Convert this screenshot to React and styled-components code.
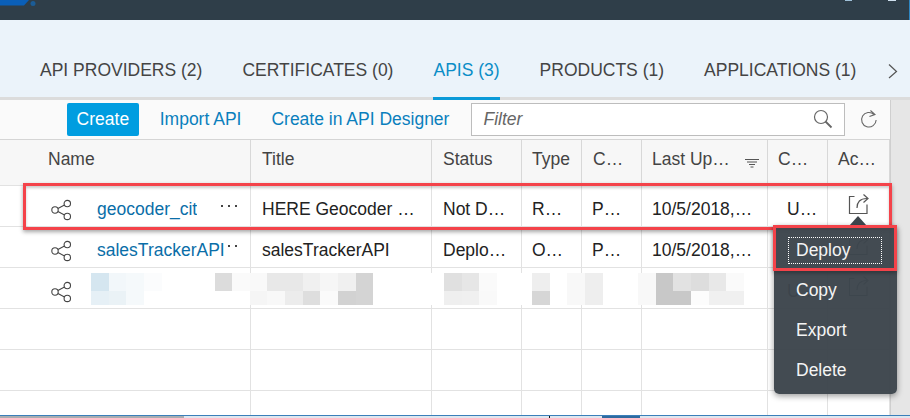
import React from "react";
import styled, { createGlobalStyle } from "styled-components";

const COLUMNS = "251px 181px 90px 60px 60px 126px 60px 62px";
const RED = "#f4434a";

const GlobalStyle = createGlobalStyle`
  html, body {
    margin: 0;
    height: 100%;
    overflow: hidden;
    background: #fff;
  }
`;

const Page = styled.div`
  position: relative;
  display: flex;
  flex-direction: column;
  width: 910px;
  height: 418px;
  overflow: hidden;
  font-family: "Liberation Sans", Arial, sans-serif;
  font-size: 17.5px;
  color: #333;
`;

const TopBar = styled.header`
  position: relative;
  flex: 0 0 20px;
  background: #2f3e49;
  border-right: 1px solid #2e86c1;
  box-sizing: border-box;
`;

const Logo = styled.svg`
  position: absolute;
  left: 0;
  top: 0;
`;

const TabBand = styled.nav`
  flex: 0 0 80px;
  box-sizing: border-box;
  display: flex;
  align-items: flex-end;
  gap: 40px;
  padding-left: 40px;
  background: #ebf3fa;
  border-bottom: 3px solid #dcdcdc;
`;

const Tab = styled.a`
  height: 38px;
  margin-bottom: -3px;
  line-height: 22px;
  white-space: nowrap;
  color: ${p => (p.$active ? "#0a8dc7" : "#444")};
  border-bottom: 3px solid ${p => (p.$active ? "#0a9ad8" : "transparent")};
`;

const TabNext = styled.svg`
  position: absolute;
  left: 887px;
  top: 63px;
`;

const Body = styled.div`
  flex: 0 0 315px;
  display: flex;
`;

const Panel = styled.section`
  width: 890px;
  display: flex;
  flex-direction: column;
  background: #fff;
`;

const Gutter = styled.div`
  flex: 1;
  background: #e6e6e6;
  border-left: 1px solid #cfcfcf;
`;

const Toolbar = styled.div`
  height: 40px;
  box-sizing: border-box;
  display: flex;
  align-items: center;
  padding: 0 12px 1px 67px;
  background: #fafafa;
  border-bottom: 1px solid #d5d5d5;
`;

const PrimaryButton = styled.button`
  width: 72px;
  height: 33px;
  padding: 0;
  border: 0;
  border-radius: 2px;
  background: #009de0;
  color: #fff;
  font: inherit;
`;

const ToolLink = styled.a`
  margin-left: ${p => p.$gap}px;
  color: #0a7fbd;
  white-space: nowrap;
`;

const Filter = styled.div`
  width: 375px;
  height: 33px;
  margin-left: 22px;
  box-sizing: border-box;
  display: flex;
  align-items: center;
  justify-content: space-between;
  padding: 0 11px 0 11px;
  background: #fff;
  border: 1px solid #bdbdbd;
  color: #666;
  font-style: italic;
`;

const RefreshIcon = styled.svg`
  margin-left: 15px;
`;

const Row = styled.div`
  display: grid;
  grid-template-columns: ${COLUMNS};
  flex: ${p => (p.$filler ? "1" : "none")};
  height: ${p => (p.$header ? "46px" : p.$filler ? "auto" : "41px")};
  box-sizing: border-box;
  background: ${p => (p.$header ? "#f7f7f7" : "#fff")};
  border-bottom: ${p => (p.$filler ? "none" : "1px solid #e2e2e2")};
`;

const Cell = styled.div`
  position: relative;
  display: flex;
  align-items: center;
  padding: ${p => (p.$header ? "0 0 6px" : "7px 0 0")};
  padding-left: ${p => p.$indent ?? 11}px;
  border-right: 1px solid ${p => (p.$header ? "#d8d8d8" : "#e2e2e2")};
  color: ${p => (p.$header ? "#444" : "#222")};
  white-space: nowrap;
  overflow: hidden;
`;

const ShareIcon = styled.svg`
  margin-left: 2px;
  flex: none;
`;

const NameLink = styled.a`
  position: relative;
  z-index: 1;
  max-width: 127px;
  margin-left: 23px;
  overflow: hidden;
  background: #fff;
  color: #0a6ea8;
`;

const MoreDots = styled.svg`
  position: absolute;
  right: 12px;
  top: ${p => p.$top}px;
`;

const SortIcon = styled.svg`
  position: absolute;
  left: 103px;
  top: 18px;
`;

const ActionIcon = styled.svg`
  margin: 0 0 12px 9px;
`;

const Mosaic = styled.svg`
  position: absolute;
  left: 91px;
  top: 273px;
`;

const BottomStrip = styled.footer`
  flex: 1;
  display: flex;
  border-top: 1px solid #3a7fba;
  background: #dfe6ee;
`;

const StripPiece = styled.div`
  width: ${p => p.$w}px;
  background: ${p => p.$bg};
`;

const RowHighlight = styled.div`
  position: absolute;
  left: 23px;
  top: 183px;
  width: 869px;
  height: 47px;
  box-sizing: border-box;
  border: 3px solid ${RED};
  box-shadow: 0 2px 4px rgba(0, 0, 0, 0.35), inset 0 2px 3px rgba(0, 0, 0, 0.2);
`;

const Menu = styled.ul`
  position: absolute;
  left: 774px;
  top: 226px;
  width: 123px;
  height: 168px;
  margin: 0;
  padding: 4px 0;
  box-sizing: border-box;
  list-style: none;
  border-radius: 0 0 5px 5px;
  background: rgba(61, 69, 76, 0.97);
  box-shadow: 0 2px 6px rgba(0, 0, 0, 0.4);
  color: #f4f4f4;
`;

const MenuArrow = styled.div`
  position: absolute;
  left: 75px;
  top: -10px;
  width: 0;
  height: 0;
  border-left: 9px solid transparent;
  border-right: 9px solid transparent;
  border-bottom: 10px solid #3d454c;
`;

const MenuItem = styled.li`
  height: 40px;
  display: flex;
  align-items: center;
  padding-left: 22px;
`;

const FocusLabel = styled.span`
  display: flex;
  align-items: center;
  width: 94px;
  height: 27px;
  margin-left: -8px;
  padding-left: 7px;
  box-sizing: border-box;
  border: 1px dotted #fff;
`;

const MenuHighlight = styled.div`
  position: absolute;
  left: -1px;
  top: -1px;
  width: 124px;
  height: 46px;
  box-sizing: border-box;
  border: 3px solid ${RED};
  box-shadow: 0 2px 4px rgba(0, 0, 0, 0.3);
`;

const Share = () => (
  <ShareIcon width="24" height="24" viewBox="0 0 24 24" fill="none" stroke="#444" strokeWidth="1.1">
    <circle cx="5" cy="12" r="3.2" />
    <circle cx="17.3" cy="5.6" r="3.2" />
    <circle cx="17.3" cy="18.4" r="3.2" />
    <path d="M7.9 10.5l6.6-3.4M7.9 13.5l6.6 3.4" />
  </ShareIcon>
);

const ExportGlyph = ({ faint }) => (
  <ActionIcon width="22" height="22" viewBox="0 0 22 22" fill="none" stroke={faint ? "#555c62" : "#555"} strokeWidth="1.2">
    <path d="M6.5 3.5H1.5V20.5H19V11.5" />
    <path d="M9 15c0-6 3-9.500 10-9.500" />
    <path d="M15.500 1.500L20 5.500L15.500 9.500" />
  </ActionIcon>
);

const Dots = ({ top }) => (
  <MoreDots $top={top} width="18" height="4" viewBox="0 0 18 4" fill="#444">
    <rect x="1" y="1" width="2" height="2" />
    <rect x="8" y="1" width="2" height="2" />
    <rect x="15" y="1" width="2" height="2" />
  </MoreDots>
);

const MOSAIC = [
  [0, 0, 18, 18, "#d5e6f0"], [18, 0, 17, 18, "#f2f7fa"], [35, 0, 18, 18, "#f5f9fb"], [53, 0, 18, 18, "#fbfcfd"],
  [0, 18, 18, 14, "#e6f0f6"], [18, 18, 17, 14, "#eaf2f6"], [35, 18, 18, 14, "#f5f9fb"],
  [124, 0, 17, 18, "#dcdcdc"], [141, 0, 18, 18, "#fafafa"], [159, 0, 17, 18, "#f9f9f9"], [176, 0, 18, 18, "#e8e8e8"],
  [194, 0, 18, 18, "#e8e8e8"], [212, 0, 17, 18, "#f0f0f0"], [229, 0, 18, 18, "#f6f6f6"], [247, 0, 18, 18, "#f0f0f0"],
  [265, 0, 17, 18, "#d4d4d4"],
  [159, 18, 17, 14, "#f5f5f5"], [176, 18, 18, 14, "#f8f8f8"], [194, 18, 18, 14, "#ececec"], [212, 18, 17, 14, "#dedede"],
  [229, 18, 18, 14, "#fafafa"], [247, 18, 18, 14, "#d2d2d2"], [265, 18, 17, 14, "#d4d4d4"],
  [353, 0, 18, 18, "#e0e0e0"], [371, 0, 17, 18, "#e6e6e6"], [388, 0, 18, 18, "#fafafa"],
  [353, 18, 18, 14, "#efefef"], [371, 18, 17, 14, "#f0f0f0"], [388, 18, 18, 14, "#f9f9f9"],
  [441, 0, 18, 18, "#eeeeee"], [441, 18, 18, 14, "#d6d6d6"],
  [476, 0, 18, 32, "#f8f8f8"], [494, 0, 18, 32, "#eeeeee"],
  [547, 0, 18, 32, "#f8f8f8"], [565, 0, 17, 32, "#c8c8c8"], [582, 0, 18, 18, "#e2e2e2"], [582, 18, 18, 14, "#c8c8c8"],
  [600, 0, 18, 18, "#dddddd"], [600, 18, 18, 14, "#fcfcfc"], [618, 0, 17, 18, "#e8e8e8"], [618, 18, 17, 14, "#f0f0f0"],
  [635, 0, 18, 18, "#fafafa"], [635, 18, 18, 14, "#f0f0f0"],
];

const HEADERS = [
  ["Name", 48], ["Title"], ["Status"], ["Type", 10], ["C…"], ["Last Up…", 10], ["C…", 10], ["Ac…", 10],
];

const App = () => (
  <Page>
    <GlobalStyle />

    <TopBar>
      <Logo width="40" height="8" viewBox="0 0 40 8">
        <path d="M0 0H29L24 5.500H0Z" fill="#0a5fb8" />
        <circle cx="33" cy="3.500" r="2.500" fill="#1b5c96" />
      </Logo>
      <Logo as="svg" width="910" height="2" viewBox="0 0 910 2">
        <rect x="845" width="7" height="1" fill="#9fc0d8" />
        <rect x="888" width="8" height="1" fill="#cfe0ee" />
      </Logo>
    </TopBar>

    <TabBand>
      <Tab>API PROVIDERS (2)</Tab>
      <Tab>CERTIFICATES (0)</Tab>
      <Tab $active>APIS (3)</Tab>
      <Tab>PRODUCTS (1)</Tab>
      <Tab>APPLICATIONS (1)</Tab>
    </TabBand>
    <TabNext width="12" height="16" viewBox="0 0 12 16" fill="none" stroke="#555" strokeWidth="1.2">
      <path d="M2 1.500L9.500 8.500L2 15" />
    </TabNext>

    <Body>
      <Panel>
        <Toolbar>
          <PrimaryButton>Create</PrimaryButton>
          <ToolLink $gap={21}>Import API</ToolLink>
          <ToolLink $gap={30}>Create in API Designer</ToolLink>
          <Filter>
            Filter
            <svg width="20" height="20" viewBox="0 0 20 20" fill="none" stroke="#666" strokeWidth="1.2">
              <circle cx="8" cy="8" r="6.500" />
              <path d="M12.500 12.500L18.500 18.500" strokeWidth="1.800" />
            </svg>
          </Filter>
          <RefreshIcon width="18" height="20" viewBox="0 0 18 20" fill="none" stroke="#666" strokeWidth="1.1">
            <path d="M14 5.500A7.300 7.300 0 1 0 16.200 11" />
            <path d="M10.500 1.500L15 5.500L9.500 7.500" />
          </RefreshIcon>
        </Toolbar>

        <Row $header>
          {HEADERS.map(([label, indent], i) => (
            <Cell $header $indent={indent} key={i}>
              {label}
              {label === "Last Up…" && (
                <SortIcon width="14" height="10" viewBox="0 0 14 10" stroke="#555" strokeWidth="1">
                  <path d="M0 1.500H14M2 4H12M4 6.500H10M5.500 9H8.500" />
                </SortIcon>
              )}
            </Cell>
          ))}
        </Row>

        <Row>
          <Cell $indent={48}>
            <Share />
            <NameLink>geocoder_cit</NameLink>
            <Dots top={18} />
          </Cell>
          <Cell>HERE Geocoder …</Cell>
          <Cell>Not D…</Cell>
          <Cell $indent={10}>R…</Cell>
          <Cell $indent={10}>P…</Cell>
          <Cell $indent={10}>10/5/2018,…</Cell>
          <Cell $indent={19}>U…</Cell>
          <Cell $indent={11}><ExportGlyph /></Cell>
        </Row>
        <Row>
          <Cell $indent={48}>
            <Share />
            <NameLink>salesTrackerAPI</NameLink>
            <Dots top={17} />
          </Cell>
          <Cell>salesTrackerAPI</Cell>
          <Cell>Deplo…</Cell>
          <Cell $indent={10}>O…</Cell>
          <Cell $indent={10}>P…</Cell>
          <Cell $indent={10}>10/5/2018,…</Cell>
          <Cell />
          <Cell $indent={11}><ExportGlyph faint /></Cell>
        </Row>
        <Row>
          <Cell $indent={48}><Share /></Cell>
          <Cell /><Cell /><Cell /><Cell /><Cell />
          <Cell $indent={19}>U…</Cell>
          <Cell $indent={11}><ExportGlyph faint /></Cell>
        </Row>
        <Row><Cell /><Cell /><Cell /><Cell /><Cell /><Cell /><Cell /><Cell /></Row>
        <Row><Cell /><Cell /><Cell /><Cell /><Cell /><Cell /><Cell /><Cell /></Row>
        <Row $filler>
          <Cell /><Cell /><Cell /><Cell /><Cell /><Cell /><Cell /><Cell />
        </Row>
      </Panel>
      <Gutter />
    </Body>

    <BottomStrip>
      <StripPiece $w={184} $bg="#a9adb1" />
      <StripPiece $w={365} $bg="#dfe6ee" />
      <StripPiece $w={1} $bg="#111" />
      <StripPiece $w={52} $bg="#dfe6ee" />
      <StripPiece $w={38} $bg="#2f6a9f" />
    </BottomStrip>

    <Mosaic width="653" height="32" viewBox="0 0 653 32">
      <rect width="653" height="32" fill="#fff" />
      {MOSAIC.map(([x, y, w, h, fill], i) => (
        <rect key={i} x={x} y={y} width={w} height={h} fill={fill} />
      ))}
    </Mosaic>

    <RowHighlight />

    <Menu>
      <MenuArrow />
      <MenuItem><FocusLabel>Deploy</FocusLabel></MenuItem>
      <MenuItem>Copy</MenuItem>
      <MenuItem>Export</MenuItem>
      <MenuItem>Delete</MenuItem>
      <MenuHighlight />
    </Menu>
  </Page>
);

export default App;
